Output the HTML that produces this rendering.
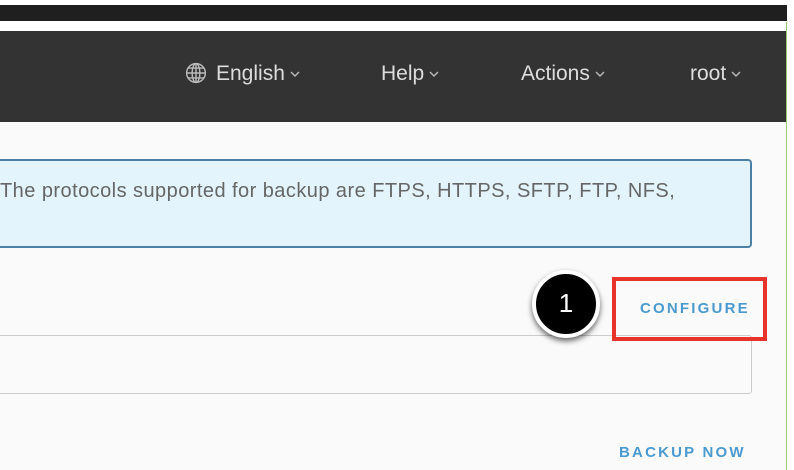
<!DOCTYPE html>
<html><head><meta charset="utf-8"><style>
*{margin:0;padding:0;box-sizing:border-box}
body{width:794px;height:470px;overflow:hidden;background:#fff;font-family:"Liberation Sans",sans-serif;position:relative}
.top{position:absolute;left:0;top:5px;width:787px;height:16px;background:#1f1f1f}
.hdr{position:absolute;left:0;top:31px;width:787px;height:91px;background:#333}
.main{position:absolute;left:0;top:122px;width:786px;height:348px;background:#fafafa}
.green{position:absolute;left:786px;top:22px;width:1px;height:448px;background:#9c6}
.nav{position:absolute;top:62px;color:#ddd;font-size:21px;white-space:nowrap}
.nav svg.c{margin-left:5px;vertical-align:3px}
.info{position:absolute;left:-2px;top:159px;width:754px;height:89px;background:#e3f4fc;border:2px solid #4a7fa6;border-left:none;border-radius:0 4px 4px 0}
.info span{position:absolute;left:2px;top:19px;font-size:20px;letter-spacing:0.45px;color:#666;white-space:nowrap}
.card{position:absolute;left:-2px;top:335px;width:754px;height:59px;border:1px solid #ccc;border-radius:0 3px 3px 0;background:#fafafa}
.link{position:absolute;color:#4a9ad0;font-size:15px;font-weight:bold;letter-spacing:2.2px}
.red{position:absolute;left:612px;top:277px;width:155px;height:64px;border:4px solid #e8332a}
.circ{position:absolute;left:532px;top:270px;width:68px;height:68px;border-radius:50%;background:#000;border:4px solid #fff;box-shadow:0 3px 6px rgba(0,0,0,.6);color:#fff;font-size:26px;text-align:center;line-height:58px}
</style></head><body>
<div class="top"></div>
<div class="hdr"></div>
<div class="main"></div>
<div class="green"></div>
<div class="nav" style="left:185px"><svg width="22" height="22" viewBox="0 0 20 20" style="vertical-align:-4px;margin-right:9px"><g fill="none" stroke="#bbb" stroke-width="1.3"><circle cx="10" cy="10" r="8.5"/><ellipse cx="10" cy="10" rx="3.5" ry="8.5"/><path d="M1.5 10h17M3 5.5h14M3 14.5h14M10 1.5v17"/></g></svg>English<svg class="c" width="10" height="6" viewBox="0 0 10 6"><path d="M1 1l4 4 4-4" fill="none" stroke="#bbb" stroke-width="1.4"/></svg></div>
<div class="nav" style="left:381px">Help<svg class="c" width="10" height="6" viewBox="0 0 10 6"><path d="M1 1l4 4 4-4" fill="none" stroke="#bbb" stroke-width="1.4"/></svg></div>
<div class="nav" style="left:521px">Actions<svg class="c" width="10" height="6" viewBox="0 0 10 6"><path d="M1 1l4 4 4-4" fill="none" stroke="#bbb" stroke-width="1.4"/></svg></div>
<div class="nav" style="left:690px">root<svg class="c" width="10" height="6" viewBox="0 0 10 6"><path d="M1 1l4 4 4-4" fill="none" stroke="#bbb" stroke-width="1.4"/></svg></div>
<div class="info"><span>The protocols supported for backup are FTPS, HTTPS, SFTP, FTP, NFS,</span></div>
<div class="card"></div>
<div class="red"></div>
<div class="link" style="left:640px;top:300px">CONFIGURE</div>
<div class="circ">1</div>
<div class="link" style="left:619px;top:444px">BACKUP NOW</div>
</body></html>
